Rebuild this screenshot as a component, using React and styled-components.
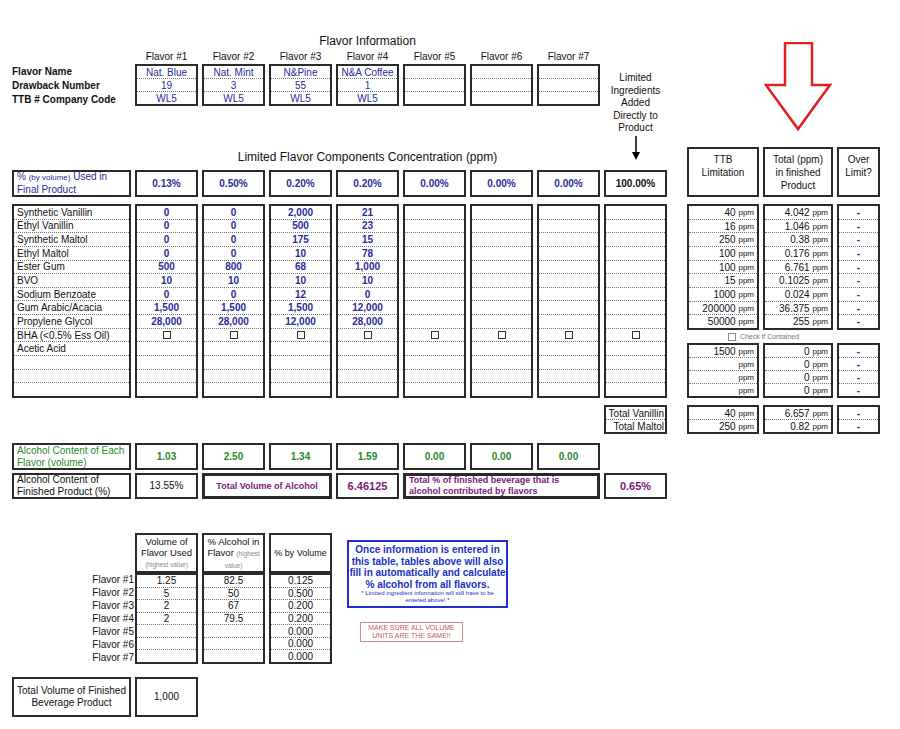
import styled, { createGlobalStyle } from "styled-components";

const Global = createGlobalStyle`
  body { margin: 0; background: #fff; font-family: "Liberation Sans", Arial, sans-serif; color: #111; }
`;

const BLUE = "#2b2b9a";
const GREEN = "#2a8a2a";
const PURPLE = "#7a1a7a";
const COLS = "119px repeat(8, 63px) 12px 72px 70px 43px";

const Sheet = styled.div`
  width: 900px;
  height: 729px;
  padding: 34px 0 0 12px;
  box-sizing: border-box;
`;

const MainGrid = styled.div`
  display: grid;
  grid-template-columns: ${COLS};
  grid-template-rows: 16px 14px 42px 41px 23px 27px 7px 194px 7px 29px 9px 27px 3px 26px;
  column-gap: 4px;
`;

const Area = styled.div`
  grid-column: ${(p) => p.col};
  grid-row: ${(p) => p.row};
  min-width: 0;
`;

const Heading = styled(Area)`
  text-align: center;
  font-size: 12px;
  line-height: 14px;
`;

const ColLabel = styled(Area)`
  text-align: center;
  font-size: 10px;
  line-height: 13px;
`;

const RowLabels = styled(Area)`
  font-size: 10px;
  font-weight: bold;
  line-height: 14px;
  padding-top: 1px;
  white-space: nowrap;
`;

const Box = styled.div`
  border: ${(p) => (p.thick ? "3px" : "2px")} solid #2a2a2a;
  box-sizing: border-box;
  height: ${(p) => p.h || "100%"};
  display: flex;
  flex-direction: column;
  background: #fff;
`;

const Cell = styled.div`
  flex: 1;
  min-height: 0;
  display: flex;
  align-items: center;
  justify-content: ${(p) => p.align || "center"};
  padding: 0 3px;
  font-size: ${(p) => p.size || 10}px;
  font-weight: ${(p) => (p.bold ? "bold" : "normal")};
  color: ${(p) => p.color || "#111"};
  white-space: nowrap;
  overflow: hidden;
  & + & { border-top: 1px dotted #777; }
`;

const TextBox = styled(Box)`
  justify-content: center;
  align-items: ${(p) => p.align || "center"};
  padding: 0 ${(p) => (p.tight ? 1 : 3)}px;
  font-size: ${(p) => p.size || 10}px;
  font-weight: ${(p) => (p.bold ? "bold" : "normal")};
  color: ${(p) => p.color || "#111"};
  line-height: ${(p) => p.lh || 12}px;
  text-align: ${(p) => (p.align === "flex-start" ? "left" : "center")};
`;

const Small = styled.span`
  font-size: ${(p) => p.size || 8}px;
  color: ${(p) => p.color || "inherit"};
  font-weight: normal;
`;

const Check = styled.span`
  display: inline-block;
  width: 6px;
  height: 6px;
  border: 1px solid #333;
`;

const LimitedNote = styled(Area)`
  display: flex;
  flex-direction: column;
  align-items: center;
  padding-top: 8px;
  font-size: 10px;
  line-height: 12.5px;
  text-align: center;
`;

const RightBlock = styled(Area)`
  display: grid;
  grid-template-columns: 72px 70px 43px;
  grid-template-rows: 126px 13px 55px;
  column-gap: 4px;
`;

const CheckNote = styled.div`
  grid-column: 1 / 4;
  display: flex;
  align-items: center;
  justify-content: center;
  gap: 4px;
  font-size: 7px;
  color: #777;
  padding-right: 40px;
`;

const BottomGrid = styled.div`
  display: grid;
  grid-template-columns: ${COLS};
  grid-template-rows: 40px 91px 13px 40px;
  column-gap: 4px;
  margin-top: 34px;
`;

const BottomLabels = styled(Area)`
  display: flex;
  flex-direction: column;
  align-items: flex-end;
  font-size: 10px;
  line-height: 13px;
  margin-right: -3px;
`;

const Note = styled(Area)`
  align-self: start;
  margin: 7px 0 0 11px;
  width: 161px;
  height: 68px;
  border: 2px solid #2030c8;
  box-sizing: border-box;
  color: #2030c8;
  text-align: center;
  font-size: 10px;
  font-weight: bold;
  line-height: 11.5px;
  padding-top: 2px;
`;

const NoteSmall = styled.div`
  font-size: 6px;
  font-weight: normal;
  line-height: 7px;
  padding: 0 4px;
`;

const Warn = styled(Area)`
  align-self: start;
  margin: 49px 0 0 24px;
  width: 101px;
  border: 1px solid #d08a8a;
  color: #c85a5a;
  font-size: 7px;
  line-height: 8px;
  text-align: center;
  padding: 1px 0;
`;

const ingredients = [
  "Synthetic Vanillin", "Ethyl Vanillin", "Synthetic Maltol", "Ethyl Maltol", "Ester Gum", "BVO",
  "Sodium Benzoate", "Gum Arabic/Acacia", "Propylene Glycol", "BHA (<0.5% Ess Oil)", "Acetic Acid", "", "", "",
];
const values = [
  ["0", "0", "0", "0", "500", "10", "0", "1,500", "28,000"],
  ["0", "0", "0", "0", "800", "10", "0", "1,500", "28,000"],
  ["2,000", "500", "175", "10", "68", "10", "12", "1,500", "12,000"],
  ["21", "23", "15", "78", "1,000", "10", "0", "12,000", "28,000"],
];
const info = [
  ["Nat. Blue", "19", "WL5"], ["Nat. Mint", "3", "WL5"], ["N&Pine", "55", "WL5"], ["N&A Coffee", "1", "WL5"],
  ["", "", ""], ["", "", ""], ["", "", ""],
];
const pct = ["0.13%", "0.50%", "0.20%", "0.20%", "0.00%", "0.00%", "0.00%"];
const alc = ["1.03", "2.50", "1.34", "1.59", "0.00", "0.00", "0.00"];
const ttb = ["40", "16", "250", "100", "100", "15", "1000", "200000", "50000"];
const tot = ["4.042", "1.046", "0.38", "0.176", "6.761", "0.1025", "0.024", "36.375", "255"];

const Ppm = ({ v }) => (
  <>
    {v}&nbsp;<Small>ppm</Small>
  </>
);

const Dashes = ({ n }) => (
  <Box>
    {Array.from({ length: n }, (_, i) => (
      <Cell key={i} color={BLUE} bold>-</Cell>
    ))}
  </Box>
);

const RedArrow = () => (
  <svg width="70" height="90" viewBox="0 0 70 90" style={{ marginTop: 8 }}>
    <polygon points="22,1 49,1 49,43 67,43 35,87 3,43 22,43" fill="none" stroke="#e02020" strokeWidth="2.5" />
  </svg>
);

export default function App() {
  return (
    <Sheet>
      <Global />
      <MainGrid>
        <Heading col="2 / 9" row="1">Flavor Information</Heading>
        {[1, 2, 3, 4, 5, 6, 7].map((n) => (
          <ColLabel key={n} col={n + 1} row="2">Flavor #{n}</ColLabel>
        ))}
        <RowLabels col="1" row="3">
          <div>Flavor Name</div>
          <div>Drawback Number</div>
          <div>TTB # Company Code</div>
        </RowLabels>
        {info.map((f, i) => (
          <Area key={i} col={i + 2} row="3">
            <Box>
              {f.map((v, j) => (
                <Cell key={j} color={BLUE}>{v}</Cell>
              ))}
            </Box>
          </Area>
        ))}
        <LimitedNote col="9" row="3 / 6">
          <div>Limited<br />Ingredients<br />Added<br />Directly to<br />Product</div>
          <svg width="10" height="26" viewBox="0 0 10 26">
            <line x1="5" y1="1" x2="5" y2="18" stroke="#000" strokeWidth="1.5" />
            <polygon points="1,17 9,17 5,25" fill="#000" />
          </svg>
        </LimitedNote>
        <Area col="12" row="1 / 5">
          <RedArrow />
        </Area>

        <Heading col="2 / 9" row="5" style={{ paddingTop: 3 }}>Limited Flavor Components Concentration (ppm)</Heading>
        <Area col="11" row="5 / 7"><TextBox lh={13}>TTB<br />Limitation<br />&nbsp;</TextBox></Area>
        <Area col="12" row="5 / 7"><TextBox lh={13}>Total (ppm)<br />in finished<br />Product</TextBox></Area>
        <Area col="13" row="5 / 7"><TextBox lh={13}>Over<br />Limit?<br />&nbsp;</TextBox></Area>

        <Area col="1" row="6">
          <TextBox align="flex-start" color={BLUE} lh={12}>
            <div>% <Small>(by volume)</Small> Used in<br />Final Product</div>
          </TextBox>
        </Area>
        {pct.map((v, i) => (
          <Area key={i} col={i + 2} row="6"><TextBox bold color={BLUE}>{v}</TextBox></Area>
        ))}
        <Area col="9" row="6"><TextBox bold>100.00%</TextBox></Area>

        <Area col="1" row="8">
          <Box>
            {ingredients.map((n, i) => (
              <Cell key={i} align="flex-start">{n}</Cell>
            ))}
          </Box>
        </Area>
        {Array.from({ length: 8 }, (_, c) => (
          <Area key={c} col={c + 2} row="8">
            <Box>
              {ingredients.map((_, r) => (
                <Cell key={r} bold color={BLUE}>
                  {r === 9 ? <Check /> : values[c] && r < 9 ? values[c][r] : ""}
                </Cell>
              ))}
            </Box>
          </Area>
        ))}
        <RightBlock col="11 / 14" row="8">
          <Box>{ttb.map((v, i) => <Cell key={i} align="flex-end"><Ppm v={v} /></Cell>)}</Box>
          <Box>{tot.map((v, i) => <Cell key={i} align="flex-end"><Ppm v={v} /></Cell>)}</Box>
          <Dashes n={9} />
          <CheckNote><Check style={{ borderColor: "#888" }} />Check if Contained</CheckNote>
          <Box>{["1500", "", "", ""].map((v, i) => <Cell key={i} align="flex-end"><Ppm v={v} /></Cell>)}</Box>
          <Box>{[0, 1, 2, 3].map((i) => <Cell key={i} align="flex-end"><Ppm v="0" /></Cell>)}</Box>
          <Dashes n={4} />
        </RightBlock>

        <Area col="9" row="10">
          <Box>
            <Cell align="flex-end" style={{ paddingRight: 1 }}>Total Vanillin</Cell>
            <Cell align="flex-end" style={{ paddingRight: 1 }}>Total Maltol</Cell>
          </Box>
        </Area>
        <Area col="11" row="10">
          <Box><Cell align="flex-end"><Ppm v="40" /></Cell><Cell align="flex-end"><Ppm v="250" /></Cell></Box>
        </Area>
        <Area col="12" row="10">
          <Box><Cell align="flex-end"><Ppm v="6.657" /></Cell><Cell align="flex-end"><Ppm v="0.82" /></Cell></Box>
        </Area>
        <Area col="13" row="10"><Dashes n={2} /></Area>

        <Area col="1" row="12">
          <TextBox align="flex-start" color={GREEN}>Alcohol Content of Each<br />Flavor (volume)</TextBox>
        </Area>
        {alc.map((v, i) => (
          <Area key={i} col={i + 2} row="12"><TextBox bold color={GREEN}>{v}</TextBox></Area>
        ))}

        <Area col="1" row="14">
          <TextBox align="flex-start">Alcohol Content of<br />Finished Product (%)</TextBox>
        </Area>
        <Area col="2" row="14"><TextBox>13.55%</TextBox></Area>
        <Area col="3 / 5" row="14"><TextBox thick bold color={PURPLE} size={9}>Total Volume of Alcohol</TextBox></Area>
        <Area col="5" row="14"><TextBox bold color={PURPLE} size={11}>6.46125</TextBox></Area>
        <Area col="6 / 9" row="14">
          <TextBox thick bold align="flex-start" color={PURPLE} size={9} lh={11}>
            Total % of finished beverage that is<br />alcohol contributed by flavors
          </TextBox>
        </Area>
        <Area col="9" row="14"><TextBox bold color={PURPLE} size={11}>0.65%</TextBox></Area>
      </MainGrid>

      <BottomGrid>
        <Area col="2" row="1">
          <TextBox tight lh={11} size={9.5}>
            <div>Volume of<br />Flavor Used<br /><Small size={6.5} color="#888">(highest value)</Small></div>
          </TextBox>
        </Area>
        <Area col="3" row="1">
          <TextBox tight lh={11} size={9.5}>
            <div>% Alcohol in<br />Flavor <Small size={6.5} color="#888">(highest</Small><br /><Small size={6.5} color="#888">value)</Small></div>
          </TextBox>
        </Area>
        <Area col="4" row="1"><TextBox tight size={9}>% by Volume</TextBox></Area>
        <BottomLabels col="1" row="2">
          {[1, 2, 3, 4, 5, 6, 7].map((n) => <div key={n}>Flavor #{n}</div>)}
        </BottomLabels>
        <Area col="2" row="2">
          <Box>{["1.25", "5", "2", "2", "", "", ""].map((v, i) => <Cell key={i}>{v}</Cell>)}</Box>
        </Area>
        <Area col="3" row="2">
          <Box>{["82.5", "50", "67", "79.5", "", "", ""].map((v, i) => <Cell key={i}>{v}</Cell>)}</Box>
        </Area>
        <Area col="4" row="2">
          <Box>{["0.125", "0.500", "0.200", "0.200", "0.000", "0.000", "0.000"].map((v, i) => <Cell key={i}>{v}</Cell>)}</Box>
        </Area>
        <Note col="5 / 9" row="1 / 3">
          Once information is entered in this table, tables above will also fill in automatically and calculate % alcohol from all flavors.
          <NoteSmall>* Limited ingredient information will still have to be entered above! *</NoteSmall>
        </Note>
        <Warn col="5 / 9" row="2">MAKE SURE ALL VOLUME<br />UNITS ARE THE SAME!!</Warn>
        <Area col="1" row="4"><TextBox>Total Volume of Finished<br />Beverage Product</TextBox></Area>
        <Area col="2" row="4"><TextBox>1,000</TextBox></Area>
      </BottomGrid>
    </Sheet>
  );
}
